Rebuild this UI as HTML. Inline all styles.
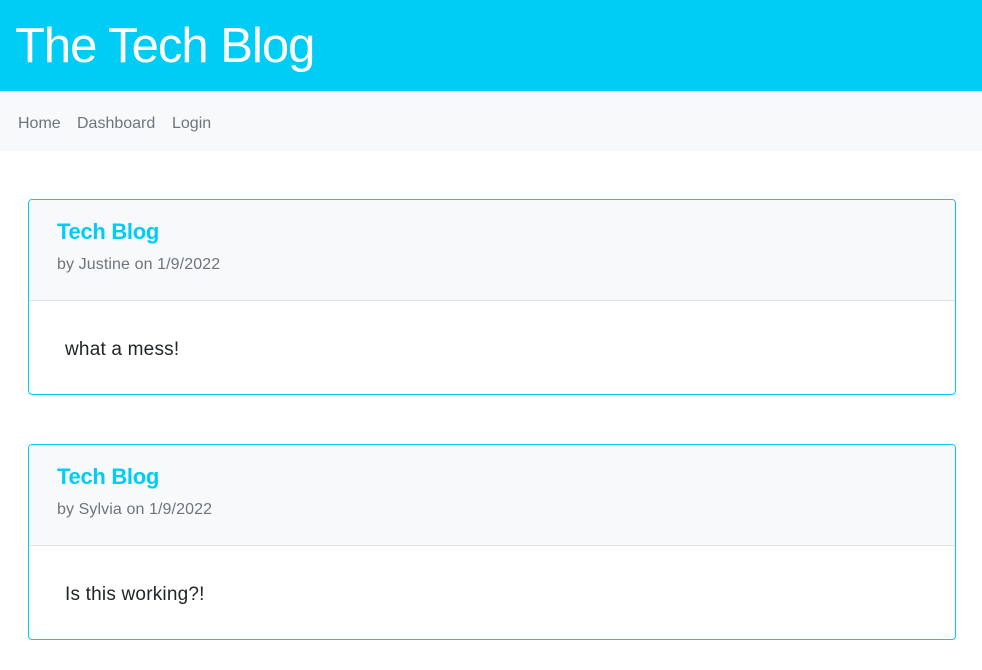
<!DOCTYPE html>
<html><head><style>
body{margin:0;font-family:"Liberation Sans",sans-serif;background:#fff;width:982px;height:670px;overflow:hidden}
.hdr{background:#00cdf5;height:91px;position:relative}
.hdr h1{margin:0;position:absolute;left:15px;top:18px;font-weight:300;font-size:49px;color:#fff;letter-spacing:-1px}
.nav{background:#f8f9fa;height:60px;position:relative}
.nav span{position:absolute;top:24px;font-size:16px;color:#6c757d}
.card{position:absolute;left:28px;width:926px;height:194px;border:1px solid #00cdf5;border-radius:4px;overflow:hidden}
.ch{background:#f8f9fa;height:100px;border-bottom:1px solid #dee2e6;position:relative}
.ch h2{margin:0;position:absolute;left:28px;top:19px;font-size:22px;font-weight:bold;color:#00cdf5;letter-spacing:-0.3px}
.ch p{margin:0;position:absolute;left:28px;top:56px;font-size:16px;color:#6c757d;letter-spacing:0.1px}
.cb{position:absolute;left:36px;top:139px;font-size:19px;color:#212529;letter-spacing:0.2px}
</style></head><body>
<div class="hdr"><h1>The Tech Blog</h1></div>
<div class="nav"><span style="left:18px">Home</span><span style="left:77px">Dashboard</span><span style="left:172px">Login</span></div>
<div class="card" style="top:199px"><div class="ch"><h2>Tech Blog</h2><p>by Justine on 1/9/2022</p></div><div class="cb">what a mess!</div></div>
<div class="card" style="top:444px"><div class="ch"><h2>Tech Blog</h2><p>by Sylvia on 1/9/2022</p></div><div class="cb">Is this working?!</div></div>
</body></html>
